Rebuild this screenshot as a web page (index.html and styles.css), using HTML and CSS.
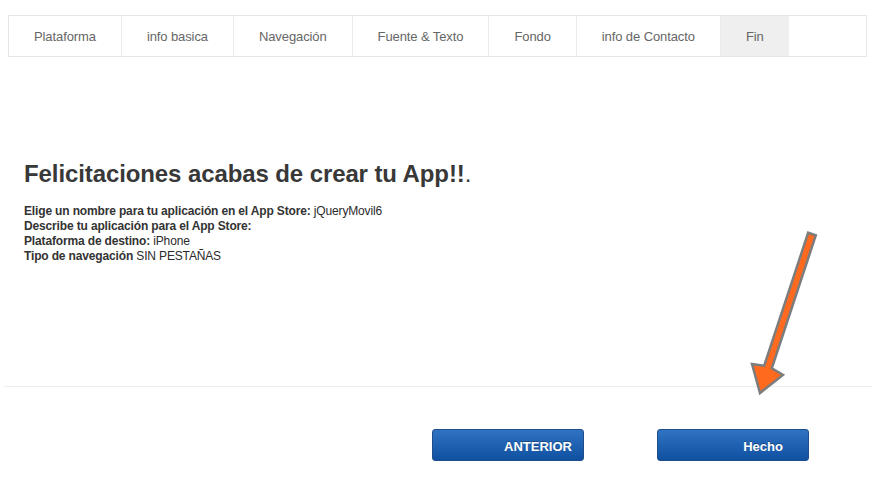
FILE: index.html
```html
<!DOCTYPE html>
<html lang="es">
<head>
    <meta charset="UTF-8">
    <title>Fin</title>
    <link rel="stylesheet" href="styles.css">
</head>
<body>
    <div class="wizard">
        <ul class="tabs">
            <li class="tab">Plataforma</li>
            <li class="tab">info basica</li>
            <li class="tab">Navegación</li>
            <li class="tab">Fuente &amp; Texto</li>
            <li class="tab">Fondo</li>
            <li class="tab">info de Contacto</li>
            <li class="tab active">Fin</li>
        </ul>

        <div class="content">
            <h1>Felicitaciones acabas de crear tu App!!<span class="dot">.</span></h1>
            <p><b>Elige un nombre para tu aplicación en el App Store:</b> jQueryMovil6</p>
            <p><b>Describe tu aplicación para el App Store:</b></p>
            <p><b>Plataforma de destino:</b> iPhone</p>
            <p><b>Tipo de navegación</b> SIN PESTAÑAS</p>
        </div>

        <div class="footer">
            <button class="btn">ANTERIOR</button>
            <button class="btn">Hecho</button>
        </div>
    </div>

    <!-- flecha que apunta al boton Hecho -->
    <svg class="arrow" width="90" height="180" viewBox="0 0 90 180">
        <polygon points="68.2,7.7 75.8,10.3 31.8,143.3 43,150 20,168 12,139 24.2,140.7"
                 fill="#ff6a1e" stroke="#7d7d7d" stroke-width="2.5" stroke-linejoin="miter"/>
    </svg>
</body>
</html>
```

FILE: styles.css
```css
body {
    margin: 0;
    font-family: "Liberation Sans", Arial, sans-serif;
    background: #fff;
    color: #333;
    position: relative;
}

.wizard {
    padding-top: 15px;
}

.tabs {
    display: flex;
    list-style: none;
    margin: 0 10px 0 8px;
    padding: 0;
    border: 1px solid #e6e6e6;
}

.tab {
    padding: 1px 25px 0;
    line-height: 39px;
    font-size: 13px;
    letter-spacing: -0.1px;
    color: #666;
    border-right: 1px solid #ebebeb;
}

.tab.active {
    background: #efefef;
    border-right: none;
}

.content {
    padding: 103px 0 0 24px;
    height: 226px;
}

.content h1 {
    margin: 0 0 16px;
    font-size: 24px;
    line-height: 28px;
    letter-spacing: -0.1px;
    color: #383838;
}

.content h1 .dot {
    font-weight: normal;
}

.content p {
    margin: 0;
    font-size: 12px;
    line-height: 15px;
    letter-spacing: -0.15px;
    color: #2a2a2a;
}

.content p b {
    color: #333;
}

.footer {
    margin: 0 5px 0 4px;
    border-top: 1px solid #ececec;
    padding: 42px 63px 0 0;
    display: flex;
    justify-content: flex-end;
    gap: 73px;
}

.btn {
    width: 152px;
    height: 32px;
    padding: 3px 0 0 60px;
    border: 1px solid #1d4d8c;
    border-radius: 3px;
    background: linear-gradient(to bottom, #3073c2, #0f51a0);
    color: #fff;
    font-family: "Liberation Sans", Arial, sans-serif;
    font-size: 13px;
    font-weight: bold;
    text-shadow: 0 -1px 0 rgba(0, 0, 0, 0.3);
    cursor: pointer;
}

.arrow {
    position: absolute;
    left: 740px;
    top: 225px;
}
```
